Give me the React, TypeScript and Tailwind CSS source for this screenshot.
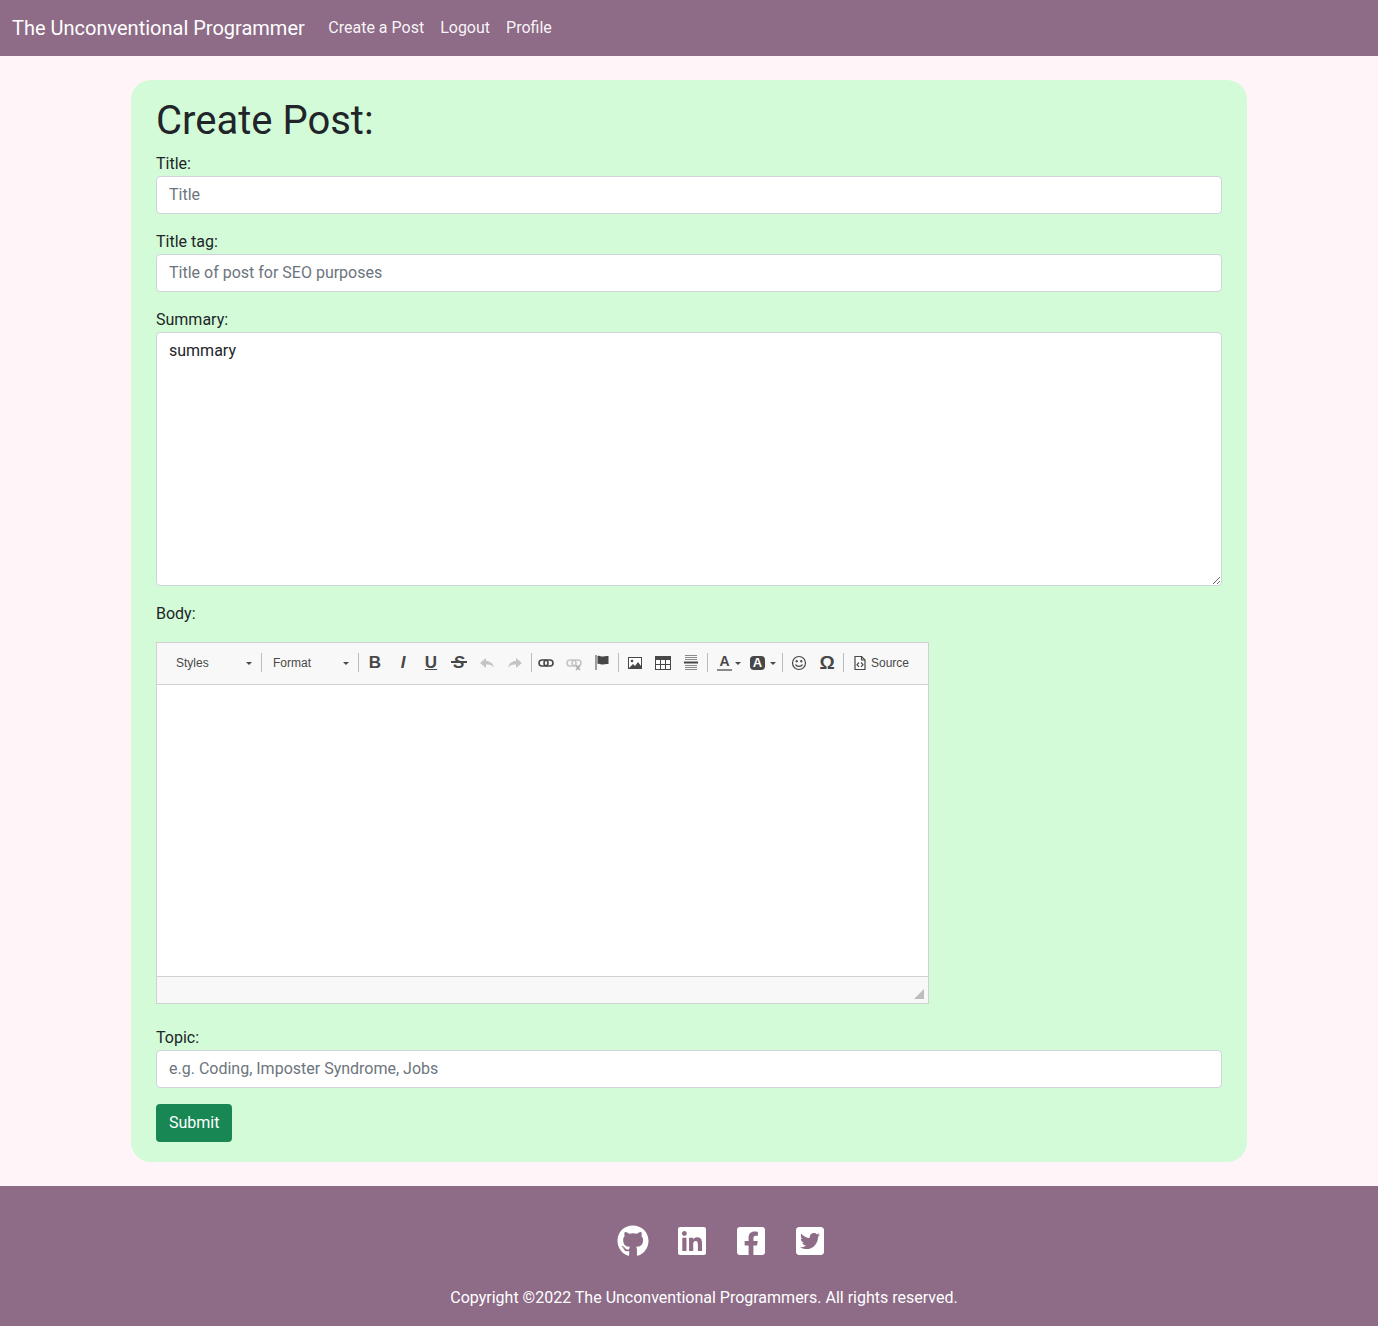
import type { ReactNode } from "react";
import { FaFacebookSquare, FaGithub, FaLinkedin, FaTwitterSquare } from "react-icons/fa";

const inputClass =
  "block h-[38px] w-full rounded border border-[#ced4da] bg-white px-3 pb-[7px] pt-[5px] text-base text-[#212529] placeholder:text-[#6c757d]";

const Field = ({ label, placeholder }: { label: string; placeholder: string }) => (
  <div className="mb-4">
    <label className="block h-6 leading-6">{label}</label>
    <input className={inputClass} placeholder={placeholder} />
  </div>
);

const Sep = ({ className = "" }: { className?: string }) => (
  <span className={`h-[19px] w-px shrink-0 bg-[#bcbcbc] ${className}`} />
);

const Btn = ({ children, className = "w-[28px]" }: { children: ReactNode; className?: string }) => (
  <span className={`flex h-[24px] shrink-0 items-center justify-center ${className}`}>{children}</span>
);

const Caret = ({ className = "" }: { className?: string }) => (
  <span className={`h-0 w-0 border-x-[3px] border-t-[3px] border-x-transparent border-t-[#484848] ${className}`} />
);

const Combo = ({ label, className }: { label: string; className: string }) => (
  <span className={`relative flex h-[24px] shrink-0 items-center text-xs text-[#484848] ${className}`}>
    {label}
    <Caret className="absolute right-[9px] top-[11px]" />
  </span>
);

const Letter = ({ children, className = "" }: { children: ReactNode; className?: string }) => (
  <span className={`text-[17px] font-bold leading-none text-[#474747] ${className}`}>{children}</span>
);

const Arrow = ({ flip }: { flip?: boolean }) => (
  <svg width="16" height="16" viewBox="0 0 16 16" className={flip ? "-scale-x-100" : ""}>
    <path d="M1 8l6-5v3c4 0 7 2 8 7-2-3-4-3.500-8-3.500V13z" fill="#c4c4c4" />
  </svg>
);

const LinkIcon = ({ off }: { off?: boolean }) => (
  <svg width="16" height="16" viewBox="0 0 16 16" fill="none" stroke={off ? "#c4c4c4" : "#474747"} strokeWidth="1.600">
    <rect x="1" y="5" width="9" height="6" rx="3" />
    <rect x="6" y="5" width="9" height="6" rx="3" />
    {off && <path d="M10 11l4 4M14 11l-4 4" stroke="#a8a8a8" strokeWidth="1.400" />}
  </svg>
);

const FlagIcon = () => (
  <svg width="16" height="16" viewBox="0 0 16 16">
    <path d="M1.500 0h1v15h-1z" fill="#474747" />
    <path d="M3.500 1c2.500-1 3.500 1 5.500.5s3-.8 5.500-.5v8c-2.500-.3-3.500 0-5.500.5s-3-1.500-5.500-.5z" fill="#474747" />
  </svg>
);

const ImageIcon = () => (
  <svg width="16" height="16" viewBox="0 0 16 16">
    <rect x="1.500" y="2.500" width="13" height="11" fill="#fff" stroke="#474747" />
    <circle cx="5" cy="6" r="1.300" fill="#474747" />
    <path d="M2 13l4-4 2 2 3-4 3 4v2z" fill="#474747" />
  </svg>
);

const TableIcon = () => (
  <svg width="16" height="16" viewBox="0 0 16 16">
    <rect x="0.500" y="1.500" width="15" height="13" fill="#fff" stroke="#474747" />
    <path d="M1 2h14v3H1z" fill="#474747" />
    <path d="M5.500 5v9M10.500 5v9M1 9.500h14" stroke="#474747" />
  </svg>
);

const RuleIcon = () => (
  <svg width="16" height="16" viewBox="0 0 16 16">
    <path d="M2 .500h12M2 2.500h12M2 4.500h12M2 10.500h12M2 12.500h12M2 14.500h12" stroke="#8a8a8a" />
    <path d="M1 7.500h14" stroke="#474747" strokeWidth="2" />
  </svg>
);

const SmileIcon = () => (
  <svg width="16" height="16" viewBox="0 0 16 16" fill="none" stroke="#474747">
    <circle cx="8" cy="8" r="6.500" strokeWidth="1.200" />
    <circle cx="5.700" cy="6.200" r="0.800" fill="#474747" />
    <circle cx="10.300" cy="6.200" r="0.800" fill="#474747" />
    <path d="M4.500 9.500c1 2.400 6 2.400 7 0" strokeWidth="1.200" />
  </svg>
);

const SourceIcon = () => (
  <svg width="12" height="16" viewBox="0 0 12 16" fill="none" stroke="#474747" strokeWidth="1.200">
    <path d="M1 1.500h6.500l3.500 3.500v9.500H1z" fill="#fff" />
    <path d="M7.500 1.500v3.500H11" />
    <path d="M5 7.500L3 9.700l2 2.200M7 7.500l2 2.200-2 2.200" />
  </svg>
);

const Toolbar = () => (
  <div className="flex h-[42px] items-center border-b border-[#d1d1d1] bg-[#f8f8f8] pb-[2px]">
    <Combo label="Styles" className="w-[104px] pl-[19px]" />
    <Sep />
    <Combo label="Format" className="w-[96px] pl-[11px]" />
    <Sep className="mr-0.5" />
    <Btn><Letter>B</Letter></Btn>
    <Btn><Letter className="italic">I</Letter></Btn>
    <Btn><Letter className="underline">U</Letter></Btn>
    <Btn>
      <span className="relative flex">
        <Letter className="italic">S</Letter>
        <span className="absolute left-[-2px] right-[-2px] top-[7px] h-[2px] bg-[#474747]" />
      </span>
    </Btn>
    <Btn><Arrow /></Btn>
    <Btn><Arrow flip /></Btn>
    <Sep className="ml-0.5" />
    <Btn><LinkIcon /></Btn>
    <Btn><LinkIcon off /></Btn>
    <Btn><FlagIcon /></Btn>
    <Sep className="mx-0.5" />
    <Btn><ImageIcon /></Btn>
    <Btn><TableIcon /></Btn>
    <Btn><RuleIcon /></Btn>
    <Sep className="mx-0.5" />
    <Btn className="relative w-[36px] pr-[7px]">
      <span className="border-b-2 border-[#8a8a8a] px-[2px] text-[14px] font-bold leading-[15px] text-[#474747]">A</span>
      <Caret className="absolute right-[5px] top-[11px]" />
    </Btn>
    <Btn className="relative w-[35px] pr-[12px]">
      <span className="flex h-[14px] w-[15px] items-center justify-center rounded-sm bg-[#474747] text-[13px] font-bold leading-none text-white">A</span>
      <Caret className="absolute right-[5px] top-[11px]" />
    </Btn>
    <Sep className="ml-px mr-0.5" />
    <Btn><SmileIcon /></Btn>
    <Btn><span className="text-[19px] font-bold leading-none text-[#474747]">Ω</span></Btn>
    <Sep className="ml-0.5" />
    <span className="ml-[10px] flex items-center gap-[5px] text-xs text-[#484848]">
      <SourceIcon />
      Source
    </span>
  </div>
);

const Editor = () => (
  <div className="w-[773px] border border-[#d1d1d1] bg-white font-['Liberation_Sans',sans-serif]">
    <Toolbar />
    <div className="h-[291px] bg-white" />
    <div className="relative h-[27px] border-t border-[#d1d1d1] bg-[#f8f8f8]">
      <svg width="10" height="10" viewBox="0 0 10 10" className="absolute bottom-[4px] right-[4px]">
        <path d="M10 0v10H0z" fill="#bdbdbd" />
      </svg>
    </div>
  </div>
);

export default function App() {
  return (
    <div className="min-h-[1326px] bg-[#fff5f8] font-['Roboto',sans-serif] text-base text-[#212529]">
      <nav className="flex h-14 items-center bg-[#8e6b87] px-3 text-white">
        <a className="mr-[15.5px] pb-px text-[20px]">The Unconventional Programmer</a>
        <a className="px-2 text-white/95">Create a Post</a>
        <a className="px-2 text-white/95">Logout</a>
        <a className="px-2 text-white/95">Profile</a>
      </nav>

      <main className="py-6">
        <div className="mx-auto w-[1116px] rounded-[20px] bg-[#d3fbd8] px-[25px] pb-5 pt-[17px]">
          <h1 className="mb-[7px] text-[40px] font-normal leading-[48px]">Create Post:</h1>
          <Field label="Title:" placeholder="Title" />
          <Field label="Title tag:" placeholder="Title of post for SEO purposes" />
          <div className="mb-4">
            <label className="block h-6 leading-6">Summary:</label>
            <textarea
              className="block h-[254px] w-full rounded border border-[#ced4da] bg-white px-3 py-1.5 text-base text-[#212529]"
              defaultValue="summary"
            />
          </div>
          <label className="mb-4 block h-6 leading-6">Body:</label>
          <Editor />
          <div className="mb-4 mt-[22px]">
            <label className="block h-6 leading-6">Topic:</label>
            <input className={inputClass} placeholder="e.g. Coding, Imposter Syndrome, Jobs" />
          </div>
          <button className="h-[38px] rounded bg-[#198754] px-[13px] text-white">Submit</button>
        </div>
      </main>

      <footer className="h-[140px] bg-[#8e6b87] pt-[39px] text-white">
        <div className="flex items-center justify-center gap-[26.8px] pl-[65px] text-[32px]">
          <FaGithub />
          <FaLinkedin />
          <FaFacebookSquare />
          <FaTwitterSquare />
        </div>
        <p className="mt-[29px] pl-[30px] text-center leading-6">
          Copyright ©2022 The Unconventional Programmers. All rights reserved.
        </p>
      </footer>
    </div>
  );
}
